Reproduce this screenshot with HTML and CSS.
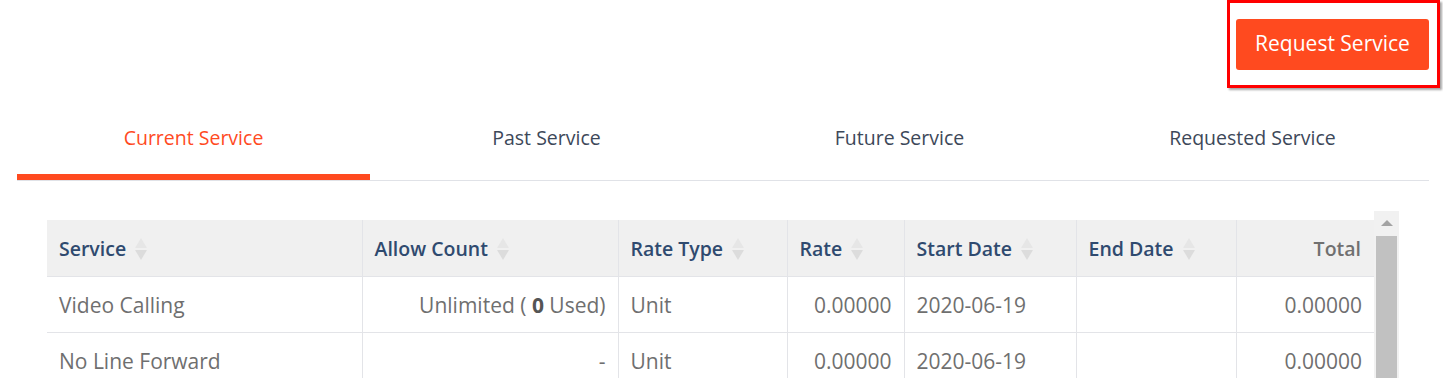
FILE: index.html
```html
<!DOCTYPE html>
<html>
<head>
<meta charset="utf-8">
<link rel="stylesheet" href="styles.css">
</head>
<body>
<div class="page">
  <div class="topbar">
    <div class="highlight">
      <button class="btn-request">Request Service</button>
    </div>
  </div>
  <div class="tabs">
    <div class="tab active">Current Service</div>
    <div class="tab">Past Service</div>
    <div class="tab">Future Service</div>
    <div class="tab">Requested Service</div>
  </div>
  <div class="table-wrap">
    <div class="table-area">
      <table class="grid">
        <colgroup>
          <col class="c1"><col class="c2"><col class="c3"><col class="c4"><col class="c5"><col class="c6"><col class="c7">
        </colgroup>
        <thead>
          <tr>
            <th>Service <span class="sort"></span></th>
            <th>Allow Count <span class="sort"></span></th>
            <th>Rate Type <span class="sort"></span></th>
            <th>Rate <span class="sort"></span></th>
            <th>Start Date <span class="sort"></span></th>
            <th>End Date <span class="sort"></span></th>
            <th class="r total">Total</th>
          </tr>
        </thead>
        <tbody>
          <tr>
            <td>Video Calling</td>
            <td class="r">Unlimited ( <b>0</b> Used)</td>
            <td>Unit</td>
            <td class="r">0.00000</td>
            <td>2020-06-19</td>
            <td></td>
            <td class="r">0.00000</td>
          </tr>
          <tr>
            <td>No Line Forward</td>
            <td class="r">-</td>
            <td>Unit</td>
            <td class="r">0.00000</td>
            <td>2020-06-19</td>
            <td></td>
            <td class="r">0.00000</td>
          </tr>
        </tbody>
      </table>
    </div>
    <div class="scrollbar">
      <div class="sb-arrow"></div>
      <div class="sb-thumb"></div>
    </div>
  </div>
</div>
</body>
</html>
```
FILE: styles.css
```css
html, body {
  margin: 0;
  padding: 0;
  background: #fff;
  overflow: hidden;
}
body {
  font-family: "Open Sans", "Noto Sans", sans-serif;
  width: 1443px;
  height: 378px;
}
.page {
  display: flex;
  flex-direction: column;
  height: 378px;
  overflow: hidden;
}
.topbar {
  display: flex;
  justify-content: flex-end;
  height: 88px;
  padding-right: 3px;
  flex: none;
}
.highlight {
  border: 3px solid #ff0000;
  box-shadow: 2px 2px 2px rgba(0, 0, 0, 0.35);
  padding: 16px 8px 15px 6px;
  width: 193px;
  height: 51px;
}
.btn-request {
  display: block;
  width: 193px;
  height: 51px;
  border: none;
  border-radius: 3px;
  background: #ff4a1f;
  color: #fff;
  font-family: "Open Sans", "Noto Sans", sans-serif;
  font-size: 21px;
  padding: 0 0 3px;
}
.tabs {
  display: grid;
  grid-template-columns: repeat(4, 1fr);
  margin: 0 14px 0 17px;
  border-bottom: 1px solid #e0e2e7;
  flex: none;
}
.tab {
  text-align: center;
  font-size: 19.5px;
  line-height: 28px;
  padding: 36px 0 22px;
  color: #3d4859;
  border-bottom: 6px solid transparent;
}
.tab.active {
  color: #ff4a1f;
  border-bottom-color: #ff4a1f;
}
.table-wrap {
  display: flex;
  margin: 30px 44px 0 47px;
}
.table-area {
  flex: 1;
  padding-top: 9px;
}
.grid {
  border-collapse: collapse;
  width: 1327px;
  table-layout: fixed;
  font-size: 21px;
}
.c1 { width: 315px; }
.c2 { width: 256px; }
.c3 { width: 169px; }
.c4 { width: 117px; }
.c5 { width: 172px; }
.c6 { width: 160px; }
.c7 { width: 138px; }
.grid th, .grid td {
  border-left: 1px solid #e3e4e8;
  border-bottom: 1px solid #e3e4e8;
  padding: 0 12px;
  text-align: left;
  white-space: nowrap;
}
.grid th:first-child, .grid td:first-child {
  border-left: none;
}
.grid th {
  background: #f0f0f0;
  color: #2f4a6f;
  font-weight: 600;
  height: 56px;
  font-size: 19.5px;
}
.grid td {
  height: 55px;
  color: #6f6f6f;
}
.grid td b {
  font-weight: 700;
  color: #555;
}
.grid .r {
  text-align: right;
}
.grid th.total {
  color: #707070;
  padding-right: 13px;
}
.sort {
  display: inline-block;
  position: relative;
  width: 12px;
  height: 24px;
  vertical-align: -5px;
  margin-left: 4px;
}
.sort::before, .sort::after {
  content: "";
  position: absolute;
  left: 0;
  border-left: 6px solid transparent;
  border-right: 6px solid transparent;
}
.sort::before {
  top: 1px;
  border-bottom: 10px solid #e6e6e6;
}
.sort::after {
  top: 13px;
  border-top: 10px solid #dcdcdc;
}
.scrollbar {
  width: 25px;
  height: 200px;
  background: #f1f1f1;
  display: flex;
  flex-direction: column;
  align-items: center;
}
.sb-arrow {
  margin-top: 9px;
  width: 0;
  height: 0;
  border-left: 6px solid transparent;
  border-right: 6px solid transparent;
  border-bottom: 6px solid #a3a3a3;
}
.sb-thumb {
  margin-top: 10px;
  width: 21px;
  flex: 1;
  background: #c1c1c1;
}
```
